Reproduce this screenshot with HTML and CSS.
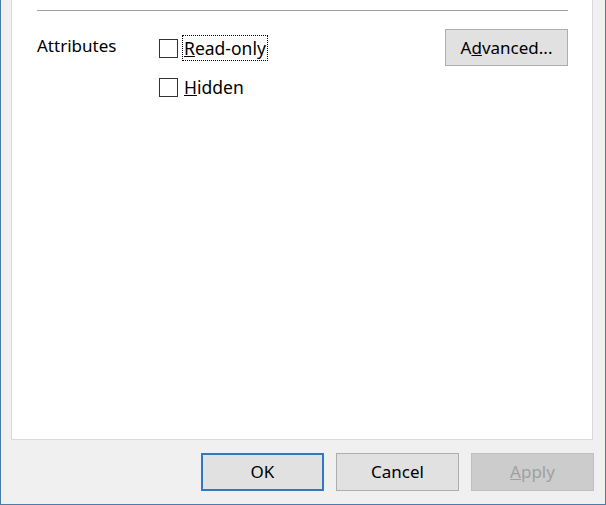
FILE: index.html
```html
<!DOCTYPE html>
<html>
<head>
<meta charset="utf-8">
<link rel="stylesheet" href="styles.css">
</head>
<body>
<div class="window">
  <div class="panel">
    <div class="separator"></div>
    <div class="attr-row">
      <div class="attr-label">Attributes</div>
      <div class="checks">
        <label class="check">
          <span class="box"></span>
          <span class="check-text focused"><u>R</u>ead-only</span>
        </label>
        <label class="check">
          <span class="box"></span>
          <span class="check-text"><u>H</u>idden</span>
        </label>
      </div>
      <button class="btn advanced">A<u>d</u>vanced...</button>
    </div>
  </div>
  <div class="footer">
    <button class="btn default">OK</button>
    <button class="btn">Cancel</button>
    <button class="btn disabled"><u>A</u>pply</button>
  </div>
</div>
</body>
</html>
```

FILE: styles.css
```css
html, body {
  margin: 0;
  padding: 0;
  background: #f0f0f0;
}
body {
  font-family: "Noto Sans", "Open Sans", sans-serif;
  font-size: 17px;
  color: #000;
}
.window {
  box-sizing: border-box;
  width: 606px;
  height: 505px;
  border-left: 1px solid #4d7ca6;
  border-right: 1px solid #4d7ca6;
  border-bottom: 1px solid #4d7ca6;
  background: #f0f0f0;
  display: flex;
  flex-direction: column;
}
.panel {
  box-sizing: border-box;
  margin-left: 10px;
  width: 582px;
  height: 440px;
  background: #fff;
  border-left: 1px solid #d9d9d9;
  border-right: 1px solid #d9d9d9;
  border-bottom: 1px solid #d9d9d9;
  padding: 10px 24px 0 25px;
}
.separator {
  height: 1px;
  background: #a0a0a0;
}
.attr-row {
  display: flex;
  align-items: flex-start;
  margin-top: 17px;
}
.attr-label {
  width: 122px;
  margin-top: 6px;
  line-height: 24px;
}
.checks {
  display: flex;
  flex-direction: column;
  gap: 19px;
  margin-top: 10px;
  flex: 1;
}
.check {
  display: flex;
  align-items: center;
  height: 20px;
}
.box {
  box-sizing: border-box;
  width: 19px;
  height: 19px;
  border: 1px solid #333;
  background: #fff;
  margin-right: 4px;
}
.check-text {
  padding: 0 1px;
  line-height: 24px;
  border: 1px dotted transparent;
  font-size: 17.5px;
}
.check-text.focused {
  border-color: #000;
}
.btn {
  box-sizing: border-box;
  font-family: inherit;
  font-size: 17px;
  color: #000;
  background: #e1e1e1;
  border: 1px solid #adadad;
  padding: 0;
  width: 123px;
  height: 38px;
  line-height: 34px;
}
.advanced {
  width: 123px;
  height: 37px;
  margin-top: 1px;
}
.footer {
  flex: 1;
  display: flex;
  justify-content: flex-end;
  align-items: flex-start;
  gap: 12px;
  padding-top: 13px;
  padding-right: 11px;
}
.btn.default {
  border: 2px solid #2f78c2;
}
.btn.disabled {
  background: #cccccc;
  border-color: #bfbfbf;
  color: #a0a0a0;
}
```
